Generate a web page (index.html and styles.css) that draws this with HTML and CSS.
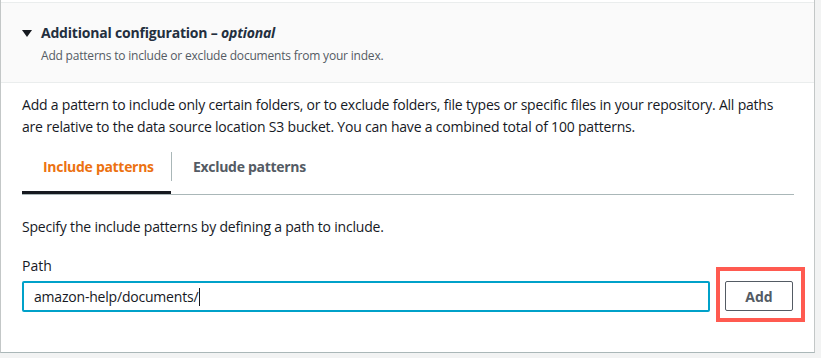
FILE: index.html
```html
<!DOCTYPE html>
<html lang="en">
<head>
<meta charset="UTF-8">
<title>Additional configuration</title>
<link rel="stylesheet" href="styles.css">
</head>
<body>
  <div class="panel">
    <!-- Expandable header -->
    <div class="panel-header">
      <div class="title-row">
        <span class="caret"></span>
        <h2>Additional configuration – <i>optional</i></h2>
      </div>
      <p class="subtitle">Add patterns to include or exclude documents from your index.</p>
    </div>

    <div class="panel-body">
      <p class="intro">Add a pattern to include only certain folders, or to exclude folders, file types or specific files in your repository. All paths are relative to the data source location S3 bucket. You can have a combined total of 100 patterns.</p>

      <!-- Tabs -->
      <div class="tabs">
        <button class="tab active">Include patterns</button>
        <span class="tab-sep"></span>
        <button class="tab">Exclude patterns</button>
      </div>

      <p class="hint">Specify the include patterns by defining a path to include.</p>

      <label class="field-label" for="path">Path</label>
      <div class="field-row">
        <div class="input-box"><span class="input-text">amazon-help/documents/</span><span class="cursor"></span></div>
        <div class="highlight">
          <button class="add-btn">Add</button>
        </div>
      </div>
    </div>
  </div>
</body>
</html>
```

FILE: styles.css
```css
/* Root Variables */
:root {
  --text: #16191f;
  --muted: #545b64;
  --orange: #ec7211;
  --blue: #00a1c9;
  --line: #eaeded;
}

* { box-sizing: border-box; margin: 0; padding: 0; }
body {
  font-family: 'Open Sans', 'Noto Sans', sans-serif;
  background: #f2f3f3;
  color: var(--text);
}

/* Panel */
.panel {
  width: 815px;
  height: 353px;
  background: #fff;
  border-left: 1px solid #c3c7c7;
  border-right: 1px solid #c3c7c7;
  border-bottom: 1px solid #aab7b8;
  padding-top: 2px;
}
.panel-header {
  background: #fafafa;
  border-top: 1px solid var(--line);
  border-bottom: 1px solid var(--line);
  height: 81px;
  padding: 20px 0 0 21px;
}
.title-row {
  display: flex;
  align-items: center;
  gap: 9px;
}
.caret {
  width: 0;
  height: 0;
  border-left: 5px solid transparent;
  border-right: 5px solid transparent;
  border-top: 7px solid var(--text);
}
h2 {
  font-size: 14px;
  font-weight: 700;
  color: #232f3e;
  line-height: 20px;
  letter-spacing: -0.2px;
}
h2 i { font-weight: 700; }
.subtitle {
  font-size: 12px;
  color: var(--muted);
  margin: 5px 0 0 19px;
  line-height: 16px;
  letter-spacing: -0.2px;
}

.panel-body {
  padding: 11px 21px 0 21px;
}
.intro {
  font-size: 14px;
  line-height: 22px;
  letter-spacing: -0.2px;
  max-width: 765px;
}

/* Tabs */
.tabs {
  display: flex;
  align-items: center;
  height: 57px;
  border-bottom: 1px solid #aab7b8;
  width: 772px;
}
.tab {
  font-family: inherit;
  font-size: 14px;
  font-weight: 700;
  background: none;
  border: none;
  color: var(--muted);
  height: 100%;
  padding: 0 21px;
  white-space: nowrap;
  letter-spacing: -0.3px;
}
.tab.active {
  color: var(--orange);
  border-bottom: 3px solid var(--text);
  padding-top: 3px;
  width: 149px;
  text-align: left;
}
.tab-sep {
  width: 1px;
  height: 29px;
  background: #aab7b8;
}

.hint {
  font-size: 14px;
  margin-top: 21px;
  line-height: 22px;
  letter-spacing: -0.2px;
}
.field-label {
  display: block;
  font-size: 14px;
  line-height: 22px;
  margin-top: 17px;
}

.field-row {
  display: flex;
  align-items: flex-start;
  margin-top: -10px;
  margin-right: -12px;
}
.input-box {
  flex-shrink: 0;
  width: 688px;
  height: 31px;
  margin-top: 14px;
  border: 2px solid var(--blue);
  border-radius: 2px;
  display: flex;
  align-items: center;
  padding-left: 10px;
  font-size: 14px;
  letter-spacing: -0.2px;
}
.cursor {
  width: 1px;
  height: 18px;
  background: var(--text);
  margin-left: 1px;
}
.highlight {
  flex-shrink: 0;
  margin-left: 6px;
  border: 4px solid #ff5a50;
  padding: 10px 8px 7px 5px;
}
.add-btn {
  display: block;
  font-family: inherit;
  width: 68px;
  height: 30px;
  background: #fff;
  border: 1px solid var(--muted);
  border-radius: 2px;
  color: var(--muted);
  font-size: 14px;
  font-weight: 700;
}
```
